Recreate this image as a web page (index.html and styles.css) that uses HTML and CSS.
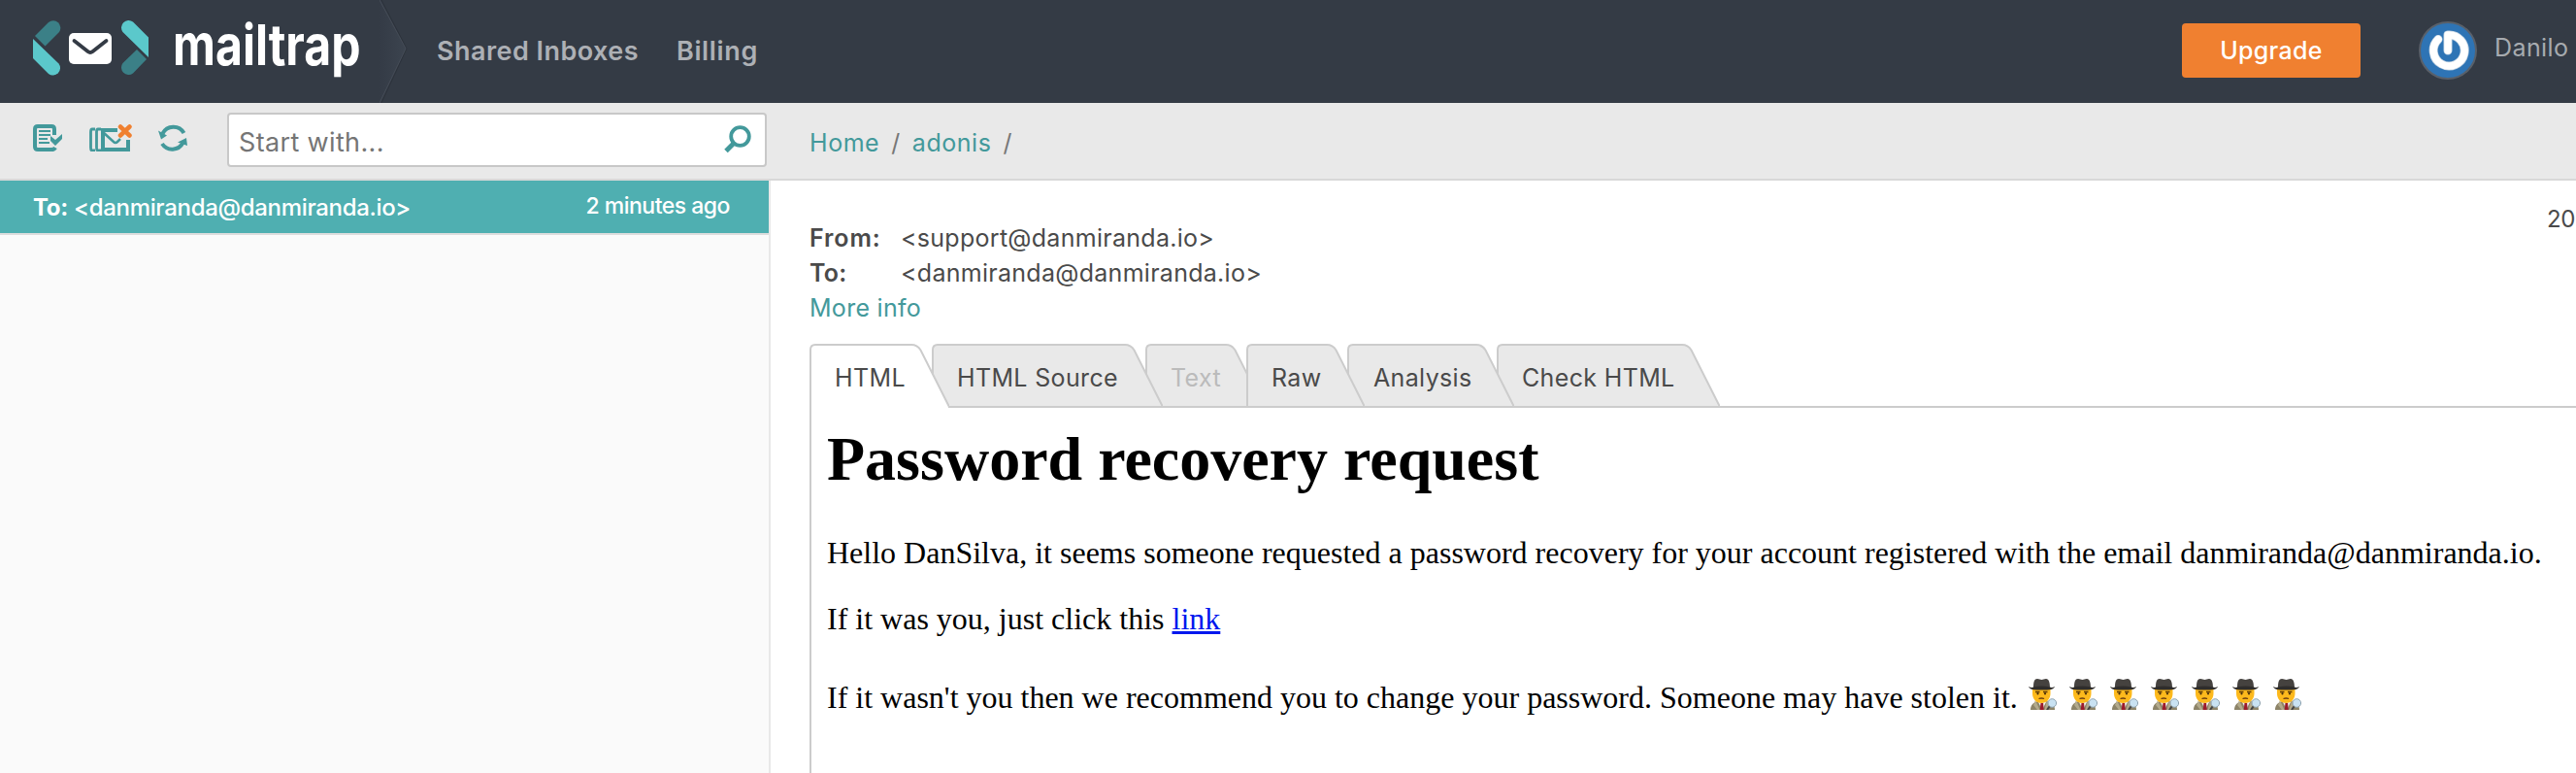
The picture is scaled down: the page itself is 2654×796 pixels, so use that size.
FILE: index.html
```html
<!DOCTYPE html>
<html lang="en">
<head>
<meta charset="utf-8">
<title>Mailtrap</title>
<link rel="stylesheet" href="styles.css">
</head>
<body>
<svg class="defs" aria-hidden="true">
  <symbol id="detective" viewBox="0 0 30 32">
    <path d="M2 32c0-5 3-8 8-9l3-1 4 0 4 2c4 1 6 4 6 8z" fill="#8d8468"/>
    <path d="M9 22l5 10 5-10z" fill="#f2f2f2"/>
    <path d="M12.500 25h2.600l.6 7h-4z" fill="#9b1c2c"/>
    <path d="M7 22l-2 5 4 5h2.500zM19 22l3 4-4 6h-1.500z" fill="#b3aa8c"/>
    <path d="M4 10h18.500v5c0 6-4 10-9.300 10S4 21 4 15z" fill="#fdb91c"/>
    <path d="M7 13.500h4.500M15 13.500h4.500" stroke="#5d3a08" stroke-width="1.300"/>
    <circle cx="9.500" cy="15.300" r="1.100" fill="#3a2408"/><circle cx="17" cy="15.300" r="1.100" fill="#3a2408"/>
    <path d="M10.500 20.500q2.800-1 5.600 0" stroke="#6a3d10" stroke-width="1.300" fill="none"/>
    <path d="M5 9c0-6 1-9 4-9 2 0 3 1 4.500 1S16 0 18 0c3 0 4 4 4 9z" fill="#45423f"/>
    <path d="M0 8q3 1.500 5 .5 8.500-2 17 0 2 1 5-.5c-1 3-5 3.500-13.500 3.500S1 11 0 8z" fill="#2f2d2b"/>
    <circle cx="24.300" cy="25" r="4.300" fill="#c9e2f2" stroke="#8fa3b0" stroke-width="1"/>
    <path d="M21.500 28.500L19 32" stroke="#444" stroke-width="2"/>
  </symbol>
</svg>

<header class="header">
  <a class="brand">
    <svg class="brand-mark" viewBox="0 0 120 58" width="120" height="58">
      <path d="M2 17L16 3A7.500 7.500 0 0 1 27 13L12.500 27.500z" fill="#3b8087"/>
      <path d="M0 20L26.500 45.500A7.500 7.500 0 0 1 16 56L0 40z" fill="#5bc8cb"/>
      <path d="M119 39L92.500 13A7.500 7.500 0 0 1 103 2.500L119 18.500z" fill="#5bc8cb"/>
      <path d="M107 31L117 41 103 55.500A7.500 7.500 0 0 1 92.500 45z" fill="#3b8087"/>
      <rect x="37" y="14" width="44" height="32" rx="5" fill="#fff"/>
      <path d="M42.500 22L56.500 33Q59 35 61.500 33L75.500 22" fill="none" stroke="#343b45" stroke-width="3.800" stroke-linecap="round"/>
    </svg>
    <span class="brand-name">mailtrap</span>
  </a>
  <svg class="divider" viewBox="0 0 30 106" width="30" height="106">
    <defs><linearGradient id="edge"><stop offset="0" stop-color="#343b46"/><stop offset="1" stop-color="#3c444f"/></linearGradient></defs>
    <path d="M0 0L27 50 0 106z" fill="url(#edge)"/>
    <path d="M2 0L28 50 2 106" fill="none" stroke="#2d333c" stroke-width="1"/>
    <path d="M0 0L27 50 0 106" fill="none" stroke="#454c57" stroke-width="1"/>
  </svg>
  <nav class="nav"><a class="nav-shared">Shared Inboxes</a><a class="nav-billing">Billing</a></nav>
  <button class="upgrade">Upgrade</button>
  <svg class="avatar" viewBox="0 0 60 60" width="60" height="60">
    <circle cx="30" cy="30" r="29" fill="#2e74b5" stroke="#59606a" stroke-width="2"/>
    <path d="M20 18.500A16 16 0 1 0 30 14V30" fill="none" stroke="#c3d3e2" stroke-width="9" stroke-linecap="round" stroke-linejoin="round"/>
    <path d="M20 18.500A16 16 0 1 0 30 14V30" fill="none" stroke="#fff" stroke-width="7.500" stroke-linecap="round" stroke-linejoin="round"/>
  </svg>
  <span class="user">Danilo</span>
</header>

<div class="app">
  <aside class="sidebar">
    <div class="tools">
      <svg class="tool" viewBox="0 0 30 28" width="30" height="28">
        <path d="M22 11V5Q22 2 19 2H5Q2 2 2 5V23Q2 26 5 26H19Q22 26 23 24" fill="none" stroke="#43999b" stroke-width="4"/>
        <path d="M6 7H18M6 11H18M6 15H15M6 19H17" stroke="#43999b" stroke-width="2"/>
        <path d="M18 12L23 16 30 10V15L23 22 18 17z" fill="#43999b"/>
      </svg>
      <svg class="tool tool-clear" viewBox="0 0 44 28" width="44" height="28">
        <path d="M6 5H3Q1.500 5 1.500 8V24Q1.500 27 3 27H6M12 5H9Q7.500 5 7.500 8V24Q7.500 27 9 27H12" fill="none" stroke="#43999b" stroke-width="2.800"/>
        <path d="M29 6H14V26H40V16" fill="none" stroke="#43999b" stroke-width="4"/>
        <path d="M14 8L25 18Q27 20 29 18L32 15" fill="none" stroke="#43999b" stroke-width="2.500"/>
        <path d="M32 2.500L41.500 11.500M41.500 2.500L32 11.500" stroke="#f08030" stroke-width="4.500" stroke-linecap="round"/>
      </svg>
      <svg class="tool" viewBox="0 0 30 28" width="30" height="28">
        <path d="M4.500 9.500A12.500 12.500 0 0 1 26.500 9M25.500 19A12.500 12.500 0 0 1 4 20" fill="none" stroke="#43999b" stroke-width="4"/>
        <path d="M0 6.500L9 11.500 3 15.500zM30 22L29 14 20 18.500z" fill="#43999b"/>
      </svg>
      <div class="search">
        <span>Start with...</span>
        <svg viewBox="0 0 29 29" width="29" height="29">
          <circle cx="16.500" cy="11.500" r="9.300" fill="none" stroke="#43999b" stroke-width="3.800"/>
          <path d="M10 18.500L2 26.500" stroke="#43999b" stroke-width="5"/>
        </svg>
      </div>
    </div>
    <div class="mail">
      <span class="mail-to"><b>To:</b> &lt;danmiranda@danmiranda.io&gt;</span>
      <span class="mail-time">2 minutes ago</span>
    </div>
  </aside>

  <main class="main">
    <div class="crumbs"><a>Home</a><i>/</i><a>adonis</a><i>/</i></div>
    <section class="message">
      <div class="meta">
        <div class="meta-row"><b class="meta-from">From:</b><span>&lt;support@danmiranda.io&gt;</span></div>
        <div class="meta-row"><b>To:</b><span>&lt;danmiranda@danmiranda.io&gt;</span></div>
        <div class="meta-row"><a>More info</a></div>
        <span class="date">20</span>
      </div>
      <div class="tabs">
        <div class="tab tab-active"><svg viewBox="0 0 144 66" width="144" height="66"><path d="M1 66V6Q1 1 6 1H105Q111 1 114.500 6.500L144 65V66"/></svg>HTML</div>
        <div class="tab tab-source"><svg viewBox="0 0 238 64" width="238" height="64"><path d="M1 65V6Q1 1 6 1H199Q205 1 208.500 6.500L238 65"/></svg>HTML Source</div>
        <div class="tab tab-text"><svg viewBox="0 0 122 64" width="122" height="64"><path d="M1 65V6Q1 1 6 1H83Q89 1 92.500 6.500L122 65"/></svg>Text</div>
        <div class="tab tab-raw"><svg viewBox="0 0 122 64" width="122" height="64"><path d="M1 65V6Q1 1 6 1H83Q89 1 92.500 6.500L122 65"/></svg>Raw</div>
        <div class="tab tab-analysis"><svg viewBox="0 0 172 64" width="172" height="64"><path d="M1 65V6Q1 1 6 1H133Q139 1 142.500 6.500L172 65"/></svg>Analysis</div>
        <div class="tab tab-check"><svg viewBox="0 0 230 64" width="230" height="64"><path d="M1 65V6Q1 1 6 1H191Q197 1 200.500 6.500L230 65"/></svg>Check HTML</div>
      </div>
      <article class="mail-body">
        <h1>Password recovery request</h1>
        <p>Hello DanSilva, it seems someone requested a password recovery for your account registered with the email danmiranda@danmiranda.io.</p>
        <p>If it was you, just click this <a>link</a></p>
        <p class="last">If it wasn't you then we recommend you to change your password. Someone may have stolen it. <span class="emojis"><svg><use href="#detective"/></svg><svg><use href="#detective"/></svg><svg><use href="#detective"/></svg><svg><use href="#detective"/></svg><svg><use href="#detective"/></svg><svg><use href="#detective"/></svg><svg><use href="#detective"/></svg></span></p>
      </article>
    </section>
  </main>
</div>
</body>
</html>
```

FILE: styles.css
```css
* { box-sizing: border-box; }
body { margin: 0; width: 2654px; height: 796px; overflow: hidden; background: #fff; font-family: Inter, "Liberation Sans", sans-serif; font-size: 25px; color: #4a4a4a; white-space: nowrap; }
.defs { position: absolute; width: 0; height: 0; }
.header { display: flex; align-items: flex-start; height: 106px; background: #343b45; overflow: hidden; }
.brand { display: flex; width: 391px; padding: 20px 0 0 34px; flex: none; }
.brand-mark { flex: none; }
.brand-name { margin: -4px 0 0 24px; color: #fff; font: 700 58px/60px Inter, sans-serif; transform-origin: 0 50%; transform: scaleX(.83); }
.divider { flex: none; }
.nav { display: flex; gap: 39px; padding: 35px 0 0 29px; line-height: 35px; font-weight: 600; font-size: 27px; color: #adb0b5; }
.nav-shared { letter-spacing: .45px; }
.nav-billing { letter-spacing: .65px; }
.upgrade { margin-left: auto; width: 184px; height: 56px; margin-top: 24px; border: 0; border-radius: 4px; background: #f08030; color: #fff; font: 500 25px/57px Inter, sans-serif; letter-spacing: .3px; padding: 0; flex: none; }
.avatar { margin: 22px 0 0 60px; flex: none; }
.user { width: 102px; padding: 34px 0 0 18px; line-height: 30px; letter-spacing: .4px; color: #a7abb0; flex: none; }
.app { display: flex; height: 690px; }
.sidebar { width: 794px; flex: none; background: #fafafa; border-right: 2px solid #e8e8e8; }
.tools { display: flex; width: 794px; height: 80px; padding: 10px 4px 0 34px; background: #e9e9e9; border-bottom: 2px solid #d8d8d8; }
.tool { flex: none; margin: 12px 28px 0 0; }
.tool-clear { margin-right: 27px; }
.search { display: flex; justify-content: space-between; width: 556px; height: 56px; margin-left: 13px; border: 2px solid #c8c8c8; border-radius: 4px; background: #fff; padding: 0 13px 0 10px; font-size: 27px; line-height: 57px; letter-spacing: .35px; color: #757575; }
.search svg { margin-top: 11px; }
.mail { display: flex; justify-content: space-between; height: 56px; background: #4fafb1; border-bottom: 2px solid #ddd; color: #fff; font-weight: 500; font-size: 24px; padding: 0 40px 0 34px; line-height: 55px; }
.mail-to { letter-spacing: -.32px; }
.mail-time { font-size: 23px; letter-spacing: -.5px; line-height: 53px; }
.main { flex: 1; min-width: 0; }
.crumbs { height: 80px; padding-left: 40px; line-height: 82px; letter-spacing: .55px; background: #e9e9e9; border-bottom: 2px solid #d8d8d8; color: #43999b; }
.crumbs i { font-style: normal; color: #777; margin: 0 12px; }
.message { padding: 40px 0 0 40px; }
.meta { position: relative; height: 128px; padding-top: 1px; }
.meta-row { display: flex; height: 36px; line-height: 36px; letter-spacing: .28px; }
.meta-row b { width: 94px; font-weight: 600; }
.meta-row .meta-from { letter-spacing: .9px; }
.meta-row a { color: #43999b; }
.date { position: absolute; left: 1790px; top: -18px; line-height: 36px; font-size: 24px; letter-spacing: -.5px; }
.tabs { display: flex; position: relative; z-index: 1; margin-bottom: -2px; }
.tab { position: relative; height: 66px; margin-right: -18px; line-height: 70px; padding-left: 26px; letter-spacing: .35px; }
.tab svg { position: absolute; left: 0; top: 0; z-index: -1; fill: #e9e9e9; stroke: #ccc; stroke-width: 2; }
.tab-active { width: 144px; z-index: 6; letter-spacing: .4px; }
.tab-active svg { fill: #fff; }
.tab-source { width: 238px; z-index: 5; }
.tab-text { width: 122px; z-index: 3; color: #bbb; }
.tab-raw { width: 122px; z-index: 4; }
.tab-analysis { width: 172px; z-index: 3; padding-left: 27px; }
.tab-check { width: 230px; z-index: 2; }
.mail-body { height: 400px; border: 2px solid #ccc; border-width: 2px 0 0 2px; padding: 16px; color: #000; font: 32px/36px "Liberation Serif", serif; }
.mail-body h1 { margin: 0 0 41px; font-size: 64px; line-height: 74px; }
.mail-body p { margin: 0 0 32px; height: 36px; }
.mail-body p.last { margin-top: 44px; }
.mail-body a { color: #0017ee; text-decoration: underline; }
.emojis { display: inline-flex; gap: 12px; margin-left: 3px; vertical-align: -2px; }
.emojis svg { width: 30px; height: 32px; }
```
